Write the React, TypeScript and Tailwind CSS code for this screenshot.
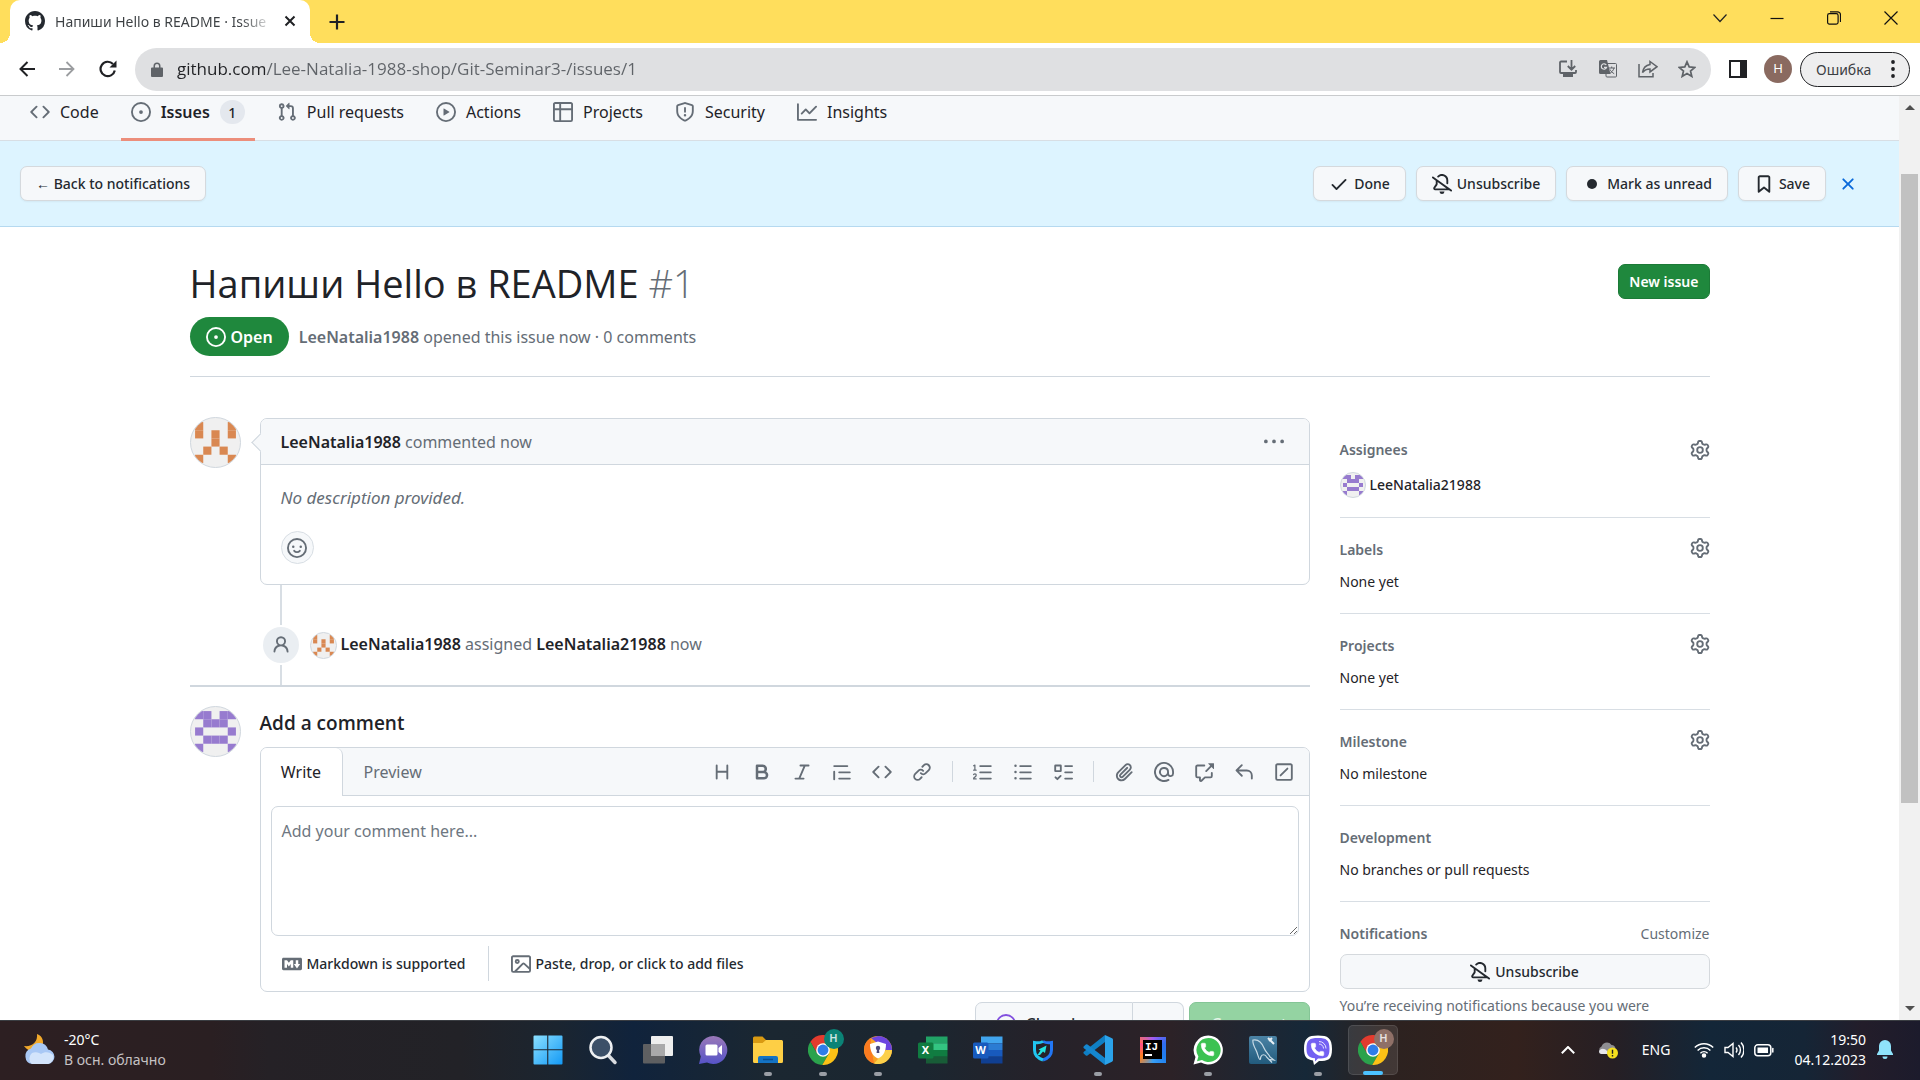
import React from "react";
import { Phone } from "lucide-react";

const P = {
  code: "m11.28 3.22 4.25 4.25a.75.75 0 0 1 0 1.06l-4.25 4.25a.749.749 0 0 1-1.275-.326.749.749 0 0 1 .215-.734L13.94 8l-3.72-3.72a.749.749 0 0 1 .326-1.275.749.749 0 0 1 .734.215Zm-6.56 0a.751.751 0 0 1 1.042.018.751.751 0 0 1 .018 1.042L2.06 8l3.72 3.72a.749.749 0 0 1-.326 1.275.749.749 0 0 1-.734-.215L.47 8.53a.75.75 0 0 1 0-1.06Z",
  issue: "M8 9.5a1.5 1.5 0 1 0 0-3 1.5 1.5 0 0 0 0 3ZM8 0a8 8 0 1 1 0 16A8 8 0 0 1 8 0ZM1.5 8a6.5 6.5 0 1 0 13 0 6.5 6.5 0 0 0-13 0Z",
  pull: "M1.5 3.25a2.25 2.25 0 1 1 3 2.122v5.256a2.251 2.251 0 1 1-1.5 0V5.372A2.25 2.25 0 0 1 1.5 3.25Zm5.677-.177L9.573.677A.25.25 0 0 1 10 .854V2.5h1A2.5 2.5 0 0 1 13.5 5v5.628a2.251 2.251 0 1 1-1.5 0V5a1 1 0 0 0-1-1h-1v1.646a.25.25 0 0 1-.427.177L7.177 3.427a.25.25 0 0 1 0-.354ZM3.75 2.5a.75.75 0 1 0 0 1.5.75.75 0 0 0 0-1.5Zm0 9.5a.75.75 0 1 0 0 1.5.75.75 0 0 0 0-1.5Zm8.25.75a.75.75 0 1 0 1.5 0 .75.75 0 0 0-1.5 0Z",
  play: "M8 0a8 8 0 1 1 0 16A8 8 0 0 1 8 0ZM1.5 8a6.5 6.5 0 1 0 13 0 6.5 6.5 0 0 0-13 0Zm4.879-2.773 4.264 2.559a.25.25 0 0 1 0 .428l-4.264 2.559A.25.25 0 0 1 6 10.559V5.442a.25.25 0 0 1 .379-.215Z",
  table: "M0 1.75C0 .784.784 0 1.75 0h12.5C15.216 0 16 .784 16 1.75v12.5A1.75 1.75 0 0 1 14.25 16H1.75A1.75 1.75 0 0 1 0 14.25ZM6.5 6.5v8h7.75a.25.25 0 0 0 .25-.25V6.5Zm8-1.5V1.75a.25.25 0 0 0-.25-.25H6.5V5Zm-13 1.5v7.75c0 .138.112.25.25.25H5v-8ZM5 5V1.5H1.75a.25.25 0 0 0-.25.25V5Z",
  shield: "M7.467.133a1.748 1.748 0 0 1 1.066 0l5.25 1.68A1.75 1.75 0 0 1 15 3.48V7c0 1.566-.32 3.182-1.303 4.682-.983 1.498-2.585 2.813-5.032 3.855a1.697 1.697 0 0 1-1.33 0c-2.447-1.042-4.049-2.357-5.032-3.855C1.32 10.182 1 8.566 1 7V3.48a1.755 1.755 0 0 1 1.217-1.667Zm.61 1.429a.25.25 0 0 0-.153 0l-5.25 1.68a.25.25 0 0 0-.174.238V7c0 1.358.275 2.666 1.057 3.86.784 1.194 2.121 2.34 4.366 3.297a.196.196 0 0 0 .154 0c2.245-.956 3.582-2.104 4.366-3.298C13.225 9.666 13.5 8.36 13.5 7V3.48a.251.251 0 0 0-.174-.237l-5.25-1.68ZM8.75 4.75v3a.75.75 0 0 1-1.5 0v-3a.75.75 0 0 1 1.5 0ZM9 10.5a1 1 0 1 1-2 0 1 1 0 0 1 2 0Z",
  graph: "M1.5 1.75V13.5h13.75a.75.75 0 0 1 0 1.5H.75a.75.75 0 0 1-.75-.75V1.75a.75.75 0 0 1 1.5 0Zm14.28 2.53-5.25 5.25a.75.75 0 0 1-1.06 0L7 7.06 4.28 9.78a.751.751 0 0 1-1.042-.018.751.751 0 0 1-.018-1.042l3.25-3.25a.75.75 0 0 1 1.06 0L10 7.94l4.72-4.72a.751.751 0 0 1 1.042.018.751.751 0 0 1 .018 1.042Z",
  check: "M13.78 4.22a.75.75 0 0 1 0 1.06l-7.25 7.25a.75.75 0 0 1-1.06 0L2.22 9.28a.751.751 0 0 1 .018-1.042.751.751 0 0 1 1.042-.018L6 10.94l6.72-6.72a.75.75 0 0 1 1.06 0Z",
  bellSlash: "m4.182 4.31.016.011 10.104 7.316.013.01 1.375.996a.75.75 0 1 1-.88 1.214L13.626 13H2.518a1.516 1.516 0 0 1-1.263-2.36l1.703-2.554A.255.255 0 0 0 3 7.947V5.305L.31 3.357a.75.75 0 1 1 .88-1.214Zm7.373 7.19L4.5 6.391v1.556c0 .346-.102.683-.294.97l-1.703 2.556a.017.017 0 0 0-.003.01c0 .005.002.009.005.012l.006.004.007.001ZM8 1.5c-.997 0-1.895.416-2.534 1.086A.75.75 0 1 1 4.38 1.55 5 5 0 0 1 13 5v2.373a.75.75 0 0 1-1.5 0V5A3.5 3.5 0 0 0 8 1.5ZM8 16a2 2 0 0 1-1.985-1.75c-.017-.137.097-.25.235-.25h3.5c.138 0 .252.113.235.25A2 2 0 0 1 8 16Z",
  dot: "M8 4a4 4 0 1 1 0 8 4 4 0 0 1 0-8Z",
  bookmark: "M3 2.75C3 1.784 3.784 1 4.75 1h6.5c.966 0 1.75.784 1.75 1.75v11.5a.75.75 0 0 1-1.227.579L8 11.722l-3.773 3.107A.751.751 0 0 1 3 14.25Zm1.75-.25a.25.25 0 0 0-.25.25v9.91l3.023-2.489a.75.75 0 0 1 .954 0l3.023 2.49V2.75a.25.25 0 0 0-.25-.25Z",
  x: "M3.72 3.72a.75.75 0 0 1 1.06 0L8 6.94l3.22-3.22a.749.749 0 0 1 1.275.326.749.749 0 0 1-.215.734L9.06 8l3.22 3.22a.749.749 0 0 1-.326 1.275.749.749 0 0 1-.734-.215L8 9.06l-3.22 3.22a.751.751 0 0 1-1.042-.018.751.751 0 0 1-.018-1.042L6.94 8 3.72 4.78a.75.75 0 0 1 0-1.06Z",
  kebab: "M8 9a1.5 1.5 0 1 0 0-3 1.5 1.5 0 0 0 0 3ZM1.5 9a1.5 1.5 0 1 0 0-3 1.5 1.5 0 0 0 0 3Zm13 0a1.5 1.5 0 1 0 0-3 1.5 1.5 0 0 0 0 3Z",
  gear: "M8 0a8.2 8.2 0 0 1 .701.031C9.444.095 9.99.645 10.16 1.29l.288 1.107c.018.066.079.158.212.224.231.114.454.243.668.386.123.082.233.09.299.071l1.103-.303c.644-.176 1.392.021 1.82.63.27.385.506.792.704 1.218.315.675.111 1.422-.364 1.891l-.814.806c-.049.048-.098.147-.088.294.016.257.016.515 0 .772-.01.147.038.246.088.294l.814.806c.475.469.679 1.216.364 1.891a7.977 7.977 0 0 1-.704 1.217c-.428.61-1.176.807-1.82.63l-1.102-.302c-.067-.019-.177-.011-.3.071a5.909 5.909 0 0 1-.668.386c-.133.066-.194.158-.211.224l-.29 1.106c-.168.646-.715 1.196-1.458 1.26a8.006 8.006 0 0 1-1.402 0c-.743-.064-1.289-.614-1.458-1.26l-.289-1.106c-.018-.066-.079-.158-.212-.224a5.738 5.738 0 0 1-.668-.386c-.123-.082-.233-.09-.299-.071l-1.103.303c-.644.176-1.392-.021-1.82-.63a8.12 8.12 0 0 1-.704-1.218c-.315-.675-.111-1.422.363-1.891l.815-.806c.05-.048.098-.147.088-.294a6.214 6.214 0 0 1 0-.772c.01-.147-.038-.246-.088-.294l-.815-.806C.635 6.045.431 5.298.746 4.623a7.92 7.92 0 0 1 .704-1.217c.428-.61 1.176-.807 1.82-.63l1.102.302c.067.019.177.011.3-.071.214-.143.437-.272.668-.386.133-.066.194-.158.211-.224l.29-1.106C6.009.645 6.556.095 7.299.03 7.53.01 7.764 0 8 0Zm-.571 1.525c-.036.003-.108.036-.137.146l-.289 1.105c-.147.561-.549.967-.998 1.189-.173.086-.34.183-.5.29-.417.278-.97.423-1.529.27l-1.103-.303c-.109-.03-.175.016-.195.045-.22.312-.412.644-.573.99-.014.031-.021.11.059.19l.815.806c.411.406.562.957.53 1.456a4.709 4.709 0 0 0 0 .582c.032.499-.119 1.05-.53 1.456l-.815.806c-.081.08-.073.159-.059.19.162.346.353.677.573.989.02.03.085.076.195.046l1.102-.303c.56-.153 1.113-.008 1.53.27.161.107.328.204.501.29.447.222.85.629.997 1.189l.289 1.105c.029.109.101.143.137.146a6.6 6.6 0 0 0 1.142 0c.036-.003.108-.036.137-.146l.289-1.105c.147-.561.549-.967.998-1.189.173-.086.34-.183.5-.29.417-.278.97-.423 1.529-.27l1.103.303c.109.029.175-.016.195-.045.22-.313.411-.644.573-.99.014-.031.021-.11-.059-.19l-.815-.806c-.411-.406-.562-.957-.53-1.456a4.709 4.709 0 0 0 0-.582c-.032-.499.119-1.05.53-1.456l.815-.806c.081-.08.073-.159.059-.19a6.464 6.464 0 0 0-.573-.989c-.02-.03-.085-.076-.195-.046l-1.102.303c-.56.153-1.113.008-1.53-.27a4.44 4.44 0 0 0-.501-.29c-.447-.222-.85-.629-.997-1.189l-.289-1.105c-.029-.11-.101-.143-.137-.146a6.6 6.6 0 0 0-1.142 0ZM11 8a3 3 0 1 1-6 0 3 3 0 0 1 6 0ZM9.5 8a1.5 1.5 0 1 0-3.001.001A1.5 1.5 0 0 0 9.5 8Z",
  person: "M10.561 8.073a6.005 6.005 0 0 1 3.432 5.142.75.75 0 1 1-1.498.07 4.5 4.5 0 0 0-8.99 0 .75.75 0 0 1-1.498-.07 6.004 6.004 0 0 1 3.431-5.142 3.999 3.999 0 1 1 5.123 0ZM10.5 5a2.5 2.5 0 1 0-5 0 2.5 2.5 0 0 0 5 0Z",
  heading: "M3.75 2a.75.75 0 0 1 .75.75V7h7V2.75a.75.75 0 0 1 1.5 0v10.5a.75.75 0 0 1-1.5 0V8.5h-7v4.75a.75.75 0 0 1-1.5 0V2.75A.75.75 0 0 1 3.75 2Z",
  bold: "M4 2h4.5a3.501 3.501 0 0 1 2.852 5.53A3.499 3.499 0 0 1 9.5 14H4a1 1 0 0 1-1-1V3a1 1 0 0 1 1-1Zm1 7v3h4.5a1.5 1.5 0 0 0 0-3Zm3.5-2a1.5 1.5 0 0 0 0-3H5v3Z",
  italic: "M6 2.75A.75.75 0 0 1 6.75 2h6.5a.75.75 0 0 1 0 1.5h-2.505l-3.858 9H9.25a.75.75 0 0 1 0 1.5h-6.5a.75.75 0 0 1 0-1.5h2.505l3.858-9H6.75A.75.75 0 0 1 6 2.75Z",
  quote: "M1.75 2.5h10.5a.75.75 0 0 1 0 1.5H1.75a.75.75 0 0 1 0-1.5Zm4 5h8.5a.75.75 0 0 1 0 1.5h-8.5a.75.75 0 0 1 0-1.5Zm0 5h8.5a.75.75 0 0 1 0 1.5h-8.5a.75.75 0 0 1 0-1.5ZM2.5 7.75v6a.75.75 0 0 1-1.5 0v-6a.75.75 0 0 1 1.5 0Z",
  link: "m7.775 3.275 1.25-1.25a3.5 3.5 0 1 1 4.95 4.95l-2.5 2.5a3.5 3.5 0 0 1-4.95 0 .751.751 0 0 1 .018-1.042.751.751 0 0 1 1.042-.018 1.998 1.998 0 0 0 2.83 0l2.5-2.5a2.002 2.002 0 0 0-2.83-2.83l-1.25 1.25a.751.751 0 0 1-1.042-.018.751.751 0 0 1-.018-1.042Zm-4.69 9.64a1.998 1.998 0 0 0 2.83 0l1.25-1.25a.751.751 0 0 1 1.042.018.751.751 0 0 1 .018 1.042l-1.25 1.25a3.5 3.5 0 1 1-4.95-4.95l2.5-2.5a3.5 3.5 0 0 1 4.95 0 .751.751 0 0 1-.018 1.042.751.751 0 0 1-1.042.018 1.998 1.998 0 0 0-2.83 0l-2.5 2.5a1.998 1.998 0 0 0 0 2.83Z",
  ol: "M5 3.25a.75.75 0 0 1 .75-.75h8.5a.75.75 0 0 1 0 1.5h-8.5A.75.75 0 0 1 5 3.25Zm0 5a.75.75 0 0 1 .75-.75h8.5a.75.75 0 0 1 0 1.5h-8.5A.75.75 0 0 1 5 8.25Zm0 5a.75.75 0 0 1 .75-.75h8.5a.75.75 0 0 1 0 1.5h-8.5a.75.75 0 0 1-.75-.75ZM.924 10.32a.5.5 0 0 1-.851-.525l.001-.001.001-.002.002-.004.007-.011c.097-.144.215-.273.348-.384.228-.19.588-.392 1.068-.392.468 0 .858.181 1.126.484.259.294.377.673.377 1.038 0 .987-.686 1.495-1.156 1.845l-.047.035c-.303.225-.522.4-.654.597h1.357a.5.5 0 0 1 0 1H.5a.5.5 0 0 1-.5-.5c0-1.005.692-1.52 1.167-1.875l.035-.025c.531-.396.8-.625.8-1.078a.57.57 0 0 0-.128-.376C1.806 10.068 1.695 10 1.5 10a.658.658 0 0 0-.429.163.835.835 0 0 0-.144.153ZM2.003 2.5V6h.503a.5.5 0 0 1 0 1H.5a.5.5 0 0 1 0-1h.503V3.308l-.28.14a.5.5 0 0 1-.446-.895l1.003-.5a.5.5 0 0 1 .723.447Z",
  ul: "M5.75 2.5h8.5a.75.75 0 0 1 0 1.5h-8.5a.75.75 0 0 1 0-1.5Zm0 5h8.5a.75.75 0 0 1 0 1.5h-8.5a.75.75 0 0 1 0-1.5Zm0 5h8.5a.75.75 0 0 1 0 1.5h-8.5a.75.75 0 0 1 0-1.5ZM2 14a1 1 0 1 1 0-2 1 1 0 0 1 0 2Zm1-6a1 1 0 1 1-2 0 1 1 0 0 1 2 0ZM2 4a1 1 0 1 1 0-2 1 1 0 0 1 0 2Z",
  tasks: "M2 2h4a1 1 0 0 1 1 1v4a1 1 0 0 1-1 1H2a1 1 0 0 1-1-1V3a1 1 0 0 1 1-1Zm4.655 8.595a.75.75 0 0 1 0 1.06L4.03 14.28a.75.75 0 0 1-1.06 0l-1.5-1.5a.749.749 0 0 1 .326-1.275.749.749 0 0 1 .734.215l.97.97 2.095-2.095a.75.75 0 0 1 1.06 0ZM9.75 2.5h5.5a.75.75 0 0 1 0 1.5h-5.5a.75.75 0 0 1 0-1.5Zm0 5h5.5a.75.75 0 0 1 0 1.5h-5.5a.75.75 0 0 1 0-1.5Zm0 5h5.5a.75.75 0 0 1 0 1.5h-5.5a.75.75 0 0 1 0-1.5Zm-7.25-9v3h3v-3Z",
  clip: "M12.212 3.02a1.753 1.753 0 0 0-2.478.003l-5.83 5.83a3.007 3.007 0 0 0-.88 2.127c0 .795.315 1.551.88 2.116.567.567 1.333.89 2.126.89.79 0 1.548-.321 2.116-.89l5.48-5.48a.75.75 0 0 1 1.061 1.06l-5.48 5.48a4.492 4.492 0 0 1-3.177 1.33c-1.2 0-2.345-.487-3.187-1.33a4.483 4.483 0 0 1-1.32-3.177c0-1.195.475-2.341 1.32-3.186l5.83-5.83a3.25 3.25 0 0 1 5.553 2.297c0 .863-.343 1.691-.953 2.301L7.439 12.39c-.375.377-.884.59-1.416.593a1.998 1.998 0 0 1-1.412-.593 1.992 1.992 0 0 1 0-2.828l5.48-5.48a.751.751 0 0 1 1.042.018.751.751 0 0 1 .018 1.042l-5.48 5.48a.492.492 0 0 0 0 .707.499.499 0 0 0 .352.154.51.51 0 0 0 .356-.154l5.833-5.827a1.755 1.755 0 0 0 0-2.481Z",
  mention: "M4.75 2.37a6.501 6.501 0 0 0 6.5 11.26.75.75 0 0 1 .75 1.298A7.999 7.999 0 0 1 .989 4.148 8 8 0 0 1 16 7.75v1.5a2.75 2.75 0 0 1-5.072 1.475 3.999 3.999 0 0 1-6.65-4.19A4 4 0 0 1 12 8v1.25a1.25 1.25 0 0 0 2.5 0V7.867a6.5 6.5 0 0 0-9.75-5.496ZM10.5 8a2.5 2.5 0 1 0-5 0 2.5 2.5 0 0 0 5 0Z",
  crossRef: "M2.75 3.5a.25.25 0 0 0-.25.25v7.5c0 .138.112.25.25.25h2a.75.75 0 0 1 .75.75v2.19l2.72-2.72a.749.749 0 0 1 .53-.22h4.5a.25.25 0 0 0 .25-.25v-2.5a.75.75 0 0 1 1.5 0v2.5A1.75 1.75 0 0 1 13.25 13H9.06l-2.573 2.573A1.458 1.458 0 0 1 4 14.543V13H2.75A1.75 1.75 0 0 1 1 11.25v-7.5C1 2.784 1.784 2 2.75 2h5.5a.75.75 0 0 1 0 1.5ZM16 1.25v4.146a.25.25 0 0 1-.427.177L14.03 4.03l-3.75 3.75a.749.749 0 0 1-1.275-.326.749.749 0 0 1 .215-.734l3.75-3.75-1.543-1.543A.25.25 0 0 1 11.604 1h4.146a.25.25 0 0 1 .25.25Z",
  reply: "M6.78 1.97a.75.75 0 0 1 0 1.06L3.81 6h6.44A4.75 4.75 0 0 1 15 10.75v2.5a.75.75 0 0 1-1.5 0v-2.5a3.25 3.25 0 0 0-3.25-3.25H3.81l2.97 2.97a.749.749 0 0 1-.326 1.275.749.749 0 0 1-.734-.215L1.47 7.28a.75.75 0 0 1 0-1.06l4.25-4.25a.75.75 0 0 1 1.06 0Z",
  slash: "M13.25 1c.966 0 1.75.784 1.75 1.75v10.5A1.75 1.75 0 0 1 13.25 15H2.75A1.75 1.75 0 0 1 1 13.25V2.75C1 1.784 1.784 1 2.75 1ZM2.75 2.5a.25.25 0 0 0-.25.25v10.5c0 .138.112.25.25.25h10.5a.25.25 0 0 0 .25-.25V2.75a.25.25 0 0 0-.25-.25Zm8.53 3.28-5.5 5.5a.751.751 0 0 1-1.042-.018.751.751 0 0 1-.018-1.042l5.5-5.5a.751.751 0 0 1 1.042.018.751.751 0 0 1 .018 1.042Z",
  markdown: "M14.85 3c.63 0 1.15.52 1.14 1.15v7.7c0 .63-.51 1.15-1.15 1.15H1.15C.52 13 0 12.48 0 11.84V4.15C0 3.52.52 3 1.15 3ZM9 11V5H7L5.5 7 4 5H2v6h2V8l1.5 1.92L7 8v3Zm2.99.5L14.5 8H13V5h-2v3H9.5Z",
  image: "M16 13.25A1.75 1.75 0 0 1 14.25 15H1.75A1.75 1.75 0 0 1 0 13.25V2.75C0 1.784.784 1 1.75 1h12.5c.966 0 1.75.784 1.75 1.75ZM1.75 2.5a.25.25 0 0 0-.25.25v10.5c0 .138.112.25.25.25h.94l.03-.03 6.077-6.078a1.75 1.75 0 0 1 2.412-.06L14.5 10.31V2.75a.25.25 0 0 0-.25-.25Zm12.5 11a.25.25 0 0 0 .25-.25v-.917l-4.298-3.889a.25.25 0 0 0-.344.009L4.81 13.5ZM7 6a2 2 0 1 1-3.999.001A2 2 0 0 1 7 6ZM5.5 6a.5.5 0 1 0-1 0 .5.5 0 0 0 1 0Z",
  github: "M8 0c4.42 0 8 3.58 8 8a8.013 8.013 0 0 1-5.45 7.59c-.4.08-.55-.17-.55-.38 0-.27.01-1.13.01-2.2 0-.75-.25-1.23-.54-1.48 1.78-.2 3.65-.88 3.65-3.95 0-.88-.31-1.59-.82-2.15.08-.2.36-1.02-.08-2.12 0 0-.67-.22-2.2.82-.64-.18-1.32-.27-2-.27-.68 0-1.36.09-2 .27-1.53-1.03-2.2-.82-2.2-.82-.44 1.1-.16 1.92-.08 2.12-.51.56-.82 1.28-.82 2.15 0 3.06 1.86 3.75 3.64 3.95-.23.2-.44.55-.51 1.07-.46.21-1.61.55-2.33-.66-.15-.24-.6-.83-1.23-.82-.67.01-.27.38.01.53.34.19.73.9.82 1.13.16.45.68 1.31 2.69.94 0 .67.01 1.3.01 1.49 0 .21-.15.45-.55.38A7.995 7.995 0 0 1 0 8c0-4.42 3.58-8 8-8Z",
};

type IconName = keyof typeof P;

function Icon({ name, className = "" }: { name: IconName; className?: string }) {
  return (
    <svg viewBox="0 0 16 16" fill="currentColor" aria-hidden="true" className={`size-5 shrink-0 ${className}`}>
      <path d={P[name]} />
    </svg>
  );
}

function Smiley() {
  return (
    <svg viewBox="0 0 16 16" fill="none" stroke="currentColor" strokeWidth="1.5" strokeLinecap="round" aria-hidden="true" className="size-5">
      <circle cx="8" cy="8" r="7.25" />
      <path d="M5.75 10.25Q6.6 11.25 8 11.25T10.25 10.25" />
      <circle cx="5" cy="7" r="1" fill="currentColor" stroke="none" />
      <circle cx="11" cy="7" r="1" fill="currentColor" stroke="none" />
    </svg>
  );
}

const ORANGE = ["10001", "10101", "00100", "01010", "10001"];
const PURPLE = ["11011", "01110", "10001", "01110", "10001"];

function Identicon({ rows, color, className }: { rows: string[]; color: string; className: string }) {
  return (
    <svg viewBox="0 0 60 60" role="img" aria-label="avatar" className={`shrink-0 rounded-full border border-[#d0d7de] bg-[#f0f0f0] ${className}`}>
      {rows.flatMap((r, y) =>
        r.split("").map((c, x) => (c === "1" ? <rect key={`${x}-${y}`} x={5 + x * 10} y={5 + y * 10} width="10" height="10" fill={color} /> : null))
      )}
    </svg>
  );
}

function ChromeLogo() {
  const arc = "M24 14H43.6A22 22 0 0 0 5.54 12.03L15.3 29Z";
  return (
    <svg viewBox="2 2 44 44" aria-hidden="true" className="size-[30px]">
      <path d={arc} fill="#e33b2e" />
      <path d={arc} fill="#2ba24c" transform="rotate(-120 24 24)" />
      <path d={arc} fill="#fbc116" transform="rotate(120 24 24)" />
      <circle cx="24" cy="24" r="10" fill="#fff" />
      <circle cx="24" cy="24" r="8" fill="#2f7de9" />
    </svg>
  );
}

/* ---------- browser frame ---------- */

function TabStrip() {
  return (
    <header className="flex h-[43px] shrink-0 items-stretch bg-[#ffde5c]">
      <span className="size-[10px] self-end bg-[radial-gradient(circle_at_0_0,transparent_10px,white_10px)]" />
      <div className="flex w-[300px] items-center rounded-t-[10px] bg-white pb-px pl-[15px] pr-2">
        <Icon name="github" className="text-[#24292f]" />
        <span className="ml-[10px] flex-1 overflow-hidden whitespace-nowrap bg-[linear-gradient(90deg,#3c4043_85%,#ffffff)] bg-clip-text text-[14px] text-transparent">
          Напиши Hello в README · Issue
        </span>
        <button aria-label="Close tab" className="ml-1 flex size-[24px] items-center justify-center">
          <svg viewBox="0 0 12 12" className="size-[12px]" stroke="#202124" strokeWidth="2"><path d="M1.5 1.5l9 9M10.500 1.500l-9 9" /></svg>
        </button>
      </div>
      <span className="size-[10px] self-end bg-[radial-gradient(circle_at_100%_0,transparent_10px,white_10px)]" />
      <button aria-label="New tab" className="ml-1 flex w-[26px] items-center justify-center">
        <svg viewBox="0 0 16 16" className="size-4" stroke="#202124" strokeWidth="2.200"><path d="M8 0.500v15M.5 8h15" /></svg>
      </button>
      <div className="ml-auto flex h-[36px] items-center pr-px">
        <button aria-label="Search tabs" className="flex w-[57px] justify-center">
          <svg viewBox="0 0 14 14" className="size-[14px]" fill="none" stroke="#222" strokeWidth="1.200"><path d="M.5 3.500L7 10.500 13.500 3.500" /></svg>
        </button>
        <button aria-label="Minimize" className="flex w-[57px] justify-center">
          <svg viewBox="0 0 14 14" className="size-[14px]" stroke="#111" strokeWidth="1.200"><path d="M.5 7.500h13" /></svg>
        </button>
        <button aria-label="Restore" className="flex w-[57px] justify-center">
          <svg viewBox="0 0 14 14" className="size-[14px]" fill="none" stroke="#111" strokeWidth="1.200"><rect x=".6" y="2.600" width="10.500" height="10.500" rx="1.800" /><path d="M3 .8h7.500a3 3 0 0 1 3 3V11" /></svg>
        </button>
        <button aria-label="Close window" className="flex w-[57px] justify-center">
          <svg viewBox="0 0 14 14" className="size-[14px]" stroke="#111" strokeWidth="1.200"><path d="M.5.5l13 13M13.500.5l-13 13" /></svg>
        </button>
      </div>
    </header>
  );
}

function Toolbar() {
  return (
    <div className="flex h-[53px] shrink-0 items-center border-b border-[#c9cbcd] bg-white pl-[7px] pr-[10px]">
      <button aria-label="Back" className="flex w-10 justify-center">
        <svg viewBox="0 0 16 16" className="size-4" fill="none" stroke="#202124" strokeWidth="2"><path d="M16 8H1.500M8.500 1L1.500 8l7 7" /></svg>
      </button>
      <button aria-label="Forward" className="flex w-10 justify-center">
        <svg viewBox="0 0 16 16" className="size-4" fill="none" stroke="#9b9da0" strokeWidth="1.800"><path d="M0 8h14.500M7.500 1l7 7-7 7" /></svg>
      </button>
      <button aria-label="Reload" className="flex w-[42px] justify-center">
        <svg viewBox="0 0 18 18" className="size-[18px]" fill="none" stroke="#202124" strokeWidth="2.200"><path d="M15.800 10.500A7.200 7.200 0 1 1 14 4" /><path d="M17.500 0.500v7h-7z" fill="#202124" stroke="none" /></svg>
      </button>
      <div className="ml-[6px] flex h-[43px] flex-1 items-center rounded-full bg-[#dfe0e2] pl-4 pr-[5px]">
        <svg viewBox="0 0 12 15" className="h-[15px] w-3" fill="#5f6368" aria-hidden="true"><path d="M2.500 5.500V4a3.500 3.500 0 0 1 7 0v1.500H11a1 1 0 0 1 1 1V14a1 1 0 0 1-1 1H1a1 1 0 0 1-1-1V6.500a1 1 0 0 1 1-1ZM4 5.500h4V4a2 2 0 0 0-4 0Z" /></svg>
        <input
          aria-label="Address"
          defaultValue="github.com/Lee-Natalia-1988-shop/Git-Seminar3-/issues/1"
          className="ml-[14px] min-w-0 flex-1 bg-[linear-gradient(90deg,#202124_90px,#5f6368_90px)] bg-clip-text font-['Open_Sans',sans-serif] text-[17px] text-transparent outline-none"
        />
        <button aria-label="Install" className="flex w-10 justify-center">
          <svg viewBox="0 0 18 18" className="size-[18px]" fill="none" stroke="#5f6368" strokeWidth="1.800"><path d="M8 1.500H2a1 1 0 0 0-1 1v9.500a1 1 0 0 0 1 1h14a1 1 0 0 0 1-1V10M12.500 0v9M8.800 6l3.700 3.700L16.200 6" /><path d="M4 13h10v4H4z" fill="#5f6368" stroke="none" /></svg>
        </button>
        <button aria-label="Translate" className="flex w-10 justify-center">
          <svg viewBox="0 0 18 18" className="size-[18px]" aria-hidden="true">
            <rect x="7" y="3.500" width="10.500" height="13.500" rx="1" fill="#dfe0e2" stroke="#5f6368" />
            <path d="M9.500 8h6.500M12.700 6.500V8M15 8c-.6 2.500-2.500 4.500-4.500 5.500M11 9.500c.8 1.800 2.500 3.300 4.200 4.200" fill="none" stroke="#5f6368" />
            <path d="M1.500 0H8l3.500 14H1.500A1.500 1.500 0 0 1 0 12.500v-11A1.500 1.500 0 0 1 1.500 0Z" fill="#5f6368" />
            <path d="M7.300 5A2.700 2.700 0 1 0 7.600 7.300H5" fill="none" stroke="#dfe0e2" strokeWidth="1.200" />
          </svg>
        </button>
        <button aria-label="Share" className="flex w-10 justify-center">
          <svg viewBox="0 0 20 18" className="h-[18px] w-5" fill="none" stroke="#5f6368" strokeWidth="1.500"><path d="M1 4v12.700h14V13" /><path d="M12 1.500l7 5.200-7 5.200V9c-3.500 0-5.800 1.200-7.500 3.700.5-4 3-7.400 7.500-8.200Z" /></svg>
        </button>
        <button aria-label="Bookmark" className="flex w-[38px] justify-center">
          <svg viewBox="0 0 18 18" className="size-[18px]" fill="none" stroke="#5f6368" strokeWidth="1.700"><path d="M9 1.800l2.200 5.100 5.500.5-4.200 3.600 1.300 5.400L9 13.500l-4.800 2.900 1.300-5.400L1.300 7.400l5.500-.5Z" /></svg>
        </button>
      </div>
      <button aria-label="Side panel" className="ml-[18px] size-[18px] border-2 border-r-[7px] border-[#202124] bg-white" />
      <button aria-label="Profile" className="ml-[17px] size-[28px] rounded-full bg-[#8a6a60] text-[13px] text-white">Н</button>
      <button className="ml-2 flex h-[35px] w-[110px] items-center justify-between rounded-full border border-[#202124] bg-[#eeeeef] pl-[15px] pr-[14px] text-[14px] text-[#3c4043]">
        Ошибка
        <svg viewBox="0 0 4 18" className="h-[18px] w-1" fill="#202124" aria-hidden="true"><circle cx="2" cy="2" r="1.900" /><circle cx="2" cy="9" r="1.900" /><circle cx="2" cy="16" r="1.900" /></svg>
      </button>
    </div>
  );
}

/* ---------- repository page ---------- */

const NAV: { label: string; icon: IconName; count?: number }[] = [
  { label: "Code", icon: "code" },
  { label: "Issues", icon: "issue", count: 1 },
  { label: "Pull requests", icon: "pull" },
  { label: "Actions", icon: "play" },
  { label: "Projects", icon: "table" },
  { label: "Security", icon: "shield" },
  { label: "Insights", icon: "graph" },
];

function RepoNav() {
  return (
    <nav className="flex h-[45px] shrink-0 items-start gap-3 border-b border-[#d8dee4] bg-[#f6f8fa] px-5">
      {NAV.map((n) => (
        <a
          key={n.label}
          href="#"
          className={`flex h-[45px] shrink-0 items-center gap-[10px] border-b-[3px] px-[10px] pb-[10px] text-[16px] text-[#1f2328] ${n.count ? "border-[#ec8e7b] font-semibold" : "border-transparent"}`}
        >
          <Icon name={n.icon} className="text-[#656d76]" />
          {n.label}
          {n.count && <span className="flex h-6 w-[25px] items-center justify-center rounded-full bg-[#e4e8ee] text-[14px] font-medium">{n.count}</span>}
        </a>
      ))}
    </nav>
  );
}

function Btn({ icon, children, className = "" }: { icon?: IconName; children: React.ReactNode; className?: string }) {
  return (
    <button className={`flex h-[35px] items-center justify-center gap-[5px] whitespace-nowrap rounded-[7px] border border-[#d5d9dd] bg-[#f6f8fa] px-[15px] text-[14px] font-medium text-[#24292f] ${className}`}>
      {icon && <Icon name={icon} />}
      {children}
    </button>
  );
}

function NotificationBar() {
  return (
    <div className="flex h-[86px] shrink-0 items-center gap-[10px] border-b border-[#b5d9f0] bg-[#ddf4ff] pl-5 pr-[41px]">
      <Btn className="mr-auto shadow-xs">← Back to notifications</Btn>
      <Btn icon="check" className="shadow-xs">Done</Btn>
      <Btn icon="bellSlash" className="shadow-xs">Unsubscribe</Btn>
      <Btn icon="dot" className="shadow-xs">Mark as unread</Btn>
      <Btn icon="bookmark" className="shadow-xs">Save</Btn>
      <button aria-label="Dismiss" className="ml-[2px] text-[#0969da]"><Icon name="x" /></button>
    </div>
  );
}

function IssueHeader() {
  return (
    <div className="border-b border-[#d0d7de] pb-5 pt-8">
      <div className="flex items-start justify-between">
        <h1 className="font-['Open_Sans','Noto_Sans',sans-serif] text-[38px] leading-[48px] text-[#1f2328]">
          Напиши Hello в README <span className="font-light text-[#656d76]">#1</span>
        </h1>
        <button className="mt-[5px] h-[35px] rounded-[7px] border border-[#1c7a37] bg-[#1f883d] px-[10px] text-[14px] font-semibold text-white">New issue</button>
      </div>
      <div className="mt-[10px] flex items-center gap-[10px] text-[16px] text-[#656d76]">
        <span className="flex h-[39px] items-center gap-[5px] rounded-full bg-[#1f883d] px-4 font-semibold text-white">
          <Icon name="issue" />
          Open
        </span>
        <p><a href="#" className="font-semibold">LeeNatalia1988</a> opened this issue now · 0 comments</p>
      </div>
    </div>
  );
}

function Comment() {
  return (
    <article className="flex items-start gap-[19px]">
      <Identicon rows={ORANGE} color="#d98852" className="size-[51px]" />
      <div className="relative mt-px flex-1 rounded-[7px] border border-[#d0d7de]">
        <span className="absolute -left-[7px] top-[17px] size-[13px] rotate-45 border-b border-l border-[#d0d7de] bg-[#f6f8fa]" />
        <header className="relative flex h-[46px] items-center justify-between rounded-t-[6px] border-b border-[#d0d7de] bg-[#f6f8fa] pl-5 pr-[25px] text-[16px] text-[#656d76]">
          <p><a href="#" className="font-semibold text-[#1f2328]">LeeNatalia1988</a> commented now</p>
          <button aria-label="Show options"><Icon name="kebab" /></button>
        </header>
        <div className="px-5 pb-5 pt-5">
          <p className="text-[17px] italic leading-[26px] text-[#656d76]">No description provided.</p>
          <button aria-label="Add reaction" className="mt-5 flex size-[33px] items-center justify-center rounded-full border border-[#d8dee4] bg-[#f6f8fa] text-[#656d76]">
            <Smiley />
          </button>
        </div>
      </div>
    </article>
  );
}

function Timeline() {
  return (
    <div className="border-b-2 border-[#d0d7de]">
      <div className="ml-[90px] h-10 border-l-2 border-[#d8dee4]" />
      <div className="flex h-10 items-center pl-[73px]">
        <span className="flex size-9 items-center justify-center rounded-full bg-[#eaeef2] text-[#656d76]"><Icon name="person" /></span>
        <Identicon rows={ORANGE} color="#d98852" className="ml-[11px] size-[27px]" />
        <p className="ml-[4px] pb-0.5 text-[16px] text-[#656d76]">
          <a href="#" className="font-semibold text-[#1f2328]">LeeNatalia1988</a> assigned <a href="#" className="font-semibold text-[#1f2328]">LeeNatalia21988</a> now
        </p>
      </div>
      <div className="ml-[90px] h-5 border-l-2 border-[#d8dee4]" />
    </div>
  );
}

const TOOLS: { label: string; icon: IconName }[][] = [
  [
    { label: "Heading", icon: "heading" },
    { label: "Bold", icon: "bold" },
    { label: "Italic", icon: "italic" },
    { label: "Quote", icon: "quote" },
    { label: "Code", icon: "code" },
    { label: "Link", icon: "link" },
  ],
  [
    { label: "Numbered list", icon: "ol" },
    { label: "Unordered list", icon: "ul" },
    { label: "Task list", icon: "tasks" },
  ],
  [
    { label: "Attach files", icon: "clip" },
    { label: "Mention", icon: "mention" },
    { label: "Reference", icon: "crossRef" },
    { label: "Saved replies", icon: "reply" },
    { label: "Slash commands", icon: "slash" },
  ],
];

function Editor() {
  return (
    <section className="flex items-start gap-[19px] pt-[19px]">
      <Identicon rows={PURPLE} color="#977bcf" className="size-[51px]" />
      <div className="flex-1">
        <h2 className="font-['Open_Sans',sans-serif] text-[19px] font-semibold leading-[34px] text-[#1f2328]"><label htmlFor="comment">Add a comment</label></h2>
        <div className="mt-[7px] rounded-[7px] border border-[#d0d7de]">
          <div className="flex h-12 items-stretch rounded-t-[6px] border-b border-[#d0d7de] bg-[#f6f8fa] text-[16px]">
            <button className="-mb-px w-[82px] rounded-t-[7px] border-r border-[#d0d7de] bg-white text-[#1f2328]">Write</button>
            <button className="px-[21px] text-[#656d76]">Preview</button>
            <div className="ml-auto flex items-center pr-[5px] text-[#656d76]">
              {TOOLS.map((group, i) => (
                <React.Fragment key={i}>
                  {i > 0 && <span className="mx-[10px] h-[21px] w-px bg-[#d0d7de]" />}
                  {group.map((t) => (
                    <button key={t.label} aria-label={t.label} className="flex w-10 justify-center"><Icon name={t.icon} /></button>
                  ))}
                </React.Fragment>
              ))}
            </div>
          </div>
          <div className="flex px-[10px] pt-[10px]">
            <textarea id="comment" placeholder="Add your comment here..." className="h-[130px] min-w-0 flex-1 resize-y rounded-[7px] border border-[#d0d7de] bg-white px-[10px] py-[11px] text-[16px] leading-[26px] placeholder:text-[#6e7781]" />
          </div>
          <div className="flex h-[55px] items-center px-[21px] text-[14px] font-medium text-[#24292f]">
            <a href="#" className="flex items-center gap-[5px]"><Icon name="markdown" className="text-[#656d76]" />Markdown is supported</a>
            <span className="mx-[22px] h-[35px] w-px bg-[#d0d7de]" />
            <button className="flex items-center gap-[5px]"><Icon name="image" className="text-[#656d76]" />Paste, drop, or click to add files</button>
          </div>
        </div>
        <div className="mt-[10px] flex justify-end">
          <button className="flex h-11 w-[158px] items-center gap-[10px] rounded-l-[7px] border border-[#d0d7de] bg-[#f6f8fa] pl-5 text-[16px] font-medium text-[#24292f]">
            <Icon name="issue" className="text-[#8250df]" />
            Close issue
          </button>
          <button aria-label="Select close reason" className="h-11 w-[51px] rounded-r-[7px] border border-l-0 border-[#d0d7de] bg-[#f6f8fa]" />
          <button className="ml-[5px] h-11 w-[121px] rounded-[7px] border border-[#84c596] bg-[#94d3a2] text-[16px] font-medium text-[#e4f4e8]">Comment</button>
        </div>
      </div>
    </section>
  );
}

const SECTIONS = [
  { title: "Labels", text: "None yet", gear: true },
  { title: "Projects", text: "None yet", gear: true },
  { title: "Milestone", text: "No milestone", gear: true },
  { title: "Development", text: "No branches or pull requests", gear: false },
];

function Sidebar() {
  return (
    <aside className="w-[370px] shrink-0 text-[14px] leading-5 text-[#1f2328]">
      <section className="border-b border-[#d8dee4] pb-[19px] pt-[23px]">
        <div className="flex justify-between">
          <h3 className="font-semibold text-[#656d76]">Assignees</h3>
          <button aria-label="Edit assignees" className="text-[#656d76]"><Icon name="gear" /></button>
        </div>
        <a href="#" className="mt-3 flex items-center gap-1 font-medium">
          <Identicon rows={PURPLE} color="#977bcf" className="size-[26px]" />
          LeeNatalia21988
        </a>
      </section>
      {SECTIONS.map((s) => (
        <section key={s.title} className="border-b border-[#d8dee4] pb-[21px] pt-5">
          <div className="flex items-start justify-between">
            <h3 className="pt-0.5 font-semibold text-[#656d76]">{s.title}</h3>
            {s.gear && <button aria-label={`Edit ${s.title}`} className="text-[#656d76]"><Icon name="gear" /></button>}
          </div>
          <p className="mt-3">{s.text}</p>
        </section>
      ))}
      <section className="pt-[22px] text-[#656d76]">
        <div className="flex justify-between">
          <h3 className="font-semibold">Notifications</h3>
          <button>Customize</button>
        </div>
        <Btn icon="bellSlash" className="mt-[10px] w-full">Unsubscribe</Btn>
        <p className="mt-[5px] leading-6">You’re receiving notifications because you were</p>
      </section>
    </aside>
  );
}

function Scrollbar() {
  return (
    <div className="flex w-[21px] shrink-0 flex-col items-center justify-between bg-[#f1f1f1] py-[7px]" aria-hidden="true">
      <svg viewBox="0 0 10 5" className="mt-[2px] h-[5px] w-[10px]" fill="#505050"><path d="M0 5l5-5 5 5z" /></svg>
      <div className="mb-1 mt-[64px] flex w-[17px] flex-1 flex-col">
        <div className="h-[76%] bg-[#c1c1c1]" />
      </div>
      <svg viewBox="0 0 10 5" className="mb-[2px] h-[5px] w-[10px]" fill="#505050"><path d="M0 0l5 5 5-5z" /></svg>
    </div>
  );
}

/* ---------- taskbar ---------- */

function OfficeIcon({ letter, colors, badge }: { letter: string; colors: string[]; badge: string }) {
  return (
    <span className="relative flex size-[30px] justify-end">
      <svg viewBox="0 0 30 30" className="size-[30px]" aria-hidden="true">
        {colors.map((c, i) => <rect key={c} x="8" y={1.500 + i * 6.750} width="21.500" height="6.750" fill={c} />)}
        <rect x="0" y="7.500" width="15.500" height="16" rx="1.500" fill={badge} />
      </svg>
      <span className="absolute left-0 top-[7px] w-4 text-center text-[11px] font-bold leading-4 text-white">{letter}</span>
    </span>
  );
}

function ProfileChrome({ badge }: { badge: string }) {
  return (
    <span className="relative">
      <ChromeLogo />
      <span className={`absolute -right-[6px] -top-[6px] flex size-[20px] items-center justify-center rounded-full text-[11px] font-semibold text-white/80 ${badge}`}>H</span>
    </span>
  );
}

const APPS: { name: string; icon: React.ReactNode; running?: boolean; active?: boolean }[] = [
  {
    name: "Start",
    icon: (
      <svg viewBox="0 0 30 30" className="size-[30px]">
        <defs><linearGradient id="win" x1="0" y1="0" x2="1" y2="1"><stop offset="0" stopColor="#8be0ff" /><stop offset="1" stopColor="#1399f5" /></linearGradient></defs>
        <path d="M.5 1.500a1 1 0 0 1 1-1h12.700v13.700H.5ZM15.300.5h13.200a1 1 0 0 1 1 1v12.700H15.300ZM.5 15.300h13.700v14.200H1.500a1 1 0 0 1-1-1ZM15.300 15.300h14.200v13.200a1 1 0 0 1-1 1H15.300Z" fill="url(#win)" />
      </svg>
    ),
  },
  {
    name: "Search",
    icon: (
      <svg viewBox="0 0 30 30" className="size-[30px]"><path d="M19.500 19.500l7.500 8" stroke="#d9dce0" strokeWidth="3.500" strokeLinecap="round" /><circle cx="13" cy="12.500" r="10.500" fill="#3c5068" stroke="#eef0f2" strokeWidth="2.500" /></svg>
    ),
  },
  {
    name: "Task view",
    icon: (
      <svg viewBox="0 0 30 30" className="size-[30px]"><rect x="8" y="1" width="22" height="20" rx="1" fill="#eeeeee" /><rect x="0" y="9" width="22" height="19.500" rx="1" fill="#5e5f61" /><rect x="8" y="9" width="14" height="12" fill="#a9a9aa" /></svg>
    ),
  },
  {
    name: "Chat",
    icon: (
      <svg viewBox="0 0 30 30" className="size-[30px]">
        <defs><linearGradient id="chat" x1="0" y1="0" x2="0" y2="1"><stop offset="0" stopColor="#9a78b8" /><stop offset="1" stopColor="#5653c8" /></linearGradient></defs>
        <path d="M15.500 1A14 14 0 1 1 9 27.500L1 29l1.800-7.500A14 14 0 0 1 15.500 1Z" fill="url(#chat)" />
        <rect x="7.500" y="9.500" width="12" height="11" rx="1.500" fill="#fff" /><path d="M20.500 13l3.500-3v10l-3.500-3z" fill="#fff" />
      </svg>
    ),
  },
  {
    name: "Explorer",
    running: true,
    icon: (
      <svg viewBox="0 0 30 30" className="size-[30px]"><path d="M0 3a1.500 1.500 0 0 1 1.500-1.500h8L13 5H29v8H0Z" fill="#d99a12" /><path d="M0 8h9.500L13 5h15.500A1.500 1.500 0 0 1 30 6.500v20a1.500 1.500 0 0 1-1.500 1.500h-27A1.500 1.500 0 0 1 0 26.500Z" fill="#fecf45" /><path d="M5 28v-5a2 2 0 0 1 2-2h16a2 2 0 0 1 2 2v5Z" fill="#1473c4" /><path d="M10 24.500h10" stroke="#0b4f90" strokeWidth="1.500" /></svg>
    ),
  },
  { name: "Chrome", running: true, icon: <ProfileChrome badge="bg-[#0b8376]" /> },
  {
    name: "Secure browser",
    running: true,
    icon: (
      <svg viewBox="0 0 30 30" className="size-[30px]">
        <circle cx="15" cy="15" r="14" fill="#f7a325" />
        <path d="M15 1A14 14 0 0 1 29 15L23 15 8 3Z" fill="#6d45e0" />
        <path d="M8 3A14 14 0 0 0 11 28.400L8 12Z" fill="#fb7b20" />
        <path d="M11 28.400A14 14 0 0 0 29 15l-6 0Z" fill="#fcd04a" />
        <path d="M15 6.500l8 2.500c0 7-2.500 12-8 14.500C9.500 21 7 16 7 9Z" fill="#fff" />
        <circle cx="15" cy="13" r="2.200" fill="#4a4a7a" /><path d="M14.200 13h1.600l.6 5h-2.800z" fill="#4a4a7a" />
      </svg>
    ),
  },
  { name: "Excel", icon: <OfficeIcon letter="X" colors={["#21a366", "#33c481", "#107c41", "#185c37"]} badge="#107c41" /> },
  { name: "Word", icon: <OfficeIcon letter="W" colors={["#41a5ee", "#2b7cd3", "#185abd", "#103f91"]} badge="#185abd" /> },
  {
    name: "Security",
    icon: (
      <svg viewBox="0 0 30 30" className="size-[30px]" fill="none"><path d="M15 6.500Q19 8.500 23.500 7.500V15c0 5-4 8.500-8.500 10" stroke="#2277f5" strokeWidth="3" /><path d="M15 6.500Q11 8.500 6.500 7.500V15c0 5 4 8.500 8.500 10" stroke="#21c5f0" strokeWidth="3" /><path d="M9.500 20l3-4.500-2-1 8-4-1.500 7.500-2-1.500-3 3.500z" fill="#22e3e0" /></svg>
    ),
  },
  {
    name: "VS Code",
    running: true,
    icon: (
      <svg viewBox="0 0 30 30" className="size-[30px]"><path d="M22 7L4.500 20.500a1.300 1.300 0 0 1-1.700-.1L.9 18.700a1.300 1.300 0 0 1 0-1.900L22 0Z" fill="#0f7fc4" /><path d="M22 23L4.500 9.500a1.300 1.300 0 0 0-1.700.1L.9 11.300a1.300 1.300 0 0 0 0 1.900L22 30Z" fill="#1587cf" /><path d="M22 0l7 3.300a1.800 1.800 0 0 1 1 1.700v20a1.800 1.800 0 0 1-1 1.700L22 30Z" fill="#2ba3ea" /></svg>
    ),
  },
  {
    name: "IntelliJ IDEA",
    icon: (
      <span className="flex size-[26px] items-center justify-center bg-[conic-gradient(from_300deg,#fe6a5b,#a05bf5,#2f6ef0,#1f7ef0,#38a0f5,#fc801d,#fe4b8b)]">
        <span className="flex size-[19px] flex-col items-start bg-black pl-[2px] font-['Liberation_Mono',monospace] text-[11px] font-bold leading-[14px] text-white">
          IJ
          <span className="h-[2px] w-[7px] bg-white" />
        </span>
      </span>
    ),
  },
  {
    name: "WhatsApp",
    running: true,
    icon: (
      <span className="relative flex size-[30px] items-center justify-center">
        <svg viewBox="0 0 30 30" className="size-[30px]"><path d="M15.500.5A14.500 14.500 0 1 1 8 27.500L.5 29.500l2-7.500A14.500 14.500 0 0 1 15.500.5Z" fill="#fff" /><path d="M15.500 3A12 12 0 1 1 9 25l-5 1.300 1.400-4.800A12 12 0 0 1 15.500 3Z" fill="#3cc252" /></svg>
        <Phone className="absolute size-[15px] fill-white text-white" strokeWidth={1} />
      </span>
    ),
  },
  {
    name: "MySQL Workbench",
    icon: (
      <svg viewBox="0 0 30 30" className="size-[30px]" fill="none"><defs><linearGradient id="sql" x1="0" y1="0" x2="0" y2="1"><stop offset="0" stopColor="#4b83a5" /><stop offset="1" stopColor="#225b7d" /></linearGradient></defs><rect x="1" y="1" width="28" height="28" rx="2" fill="url(#sql)" /><path d="M5 5c5-1 9 3 11 8s5 6 6 9l4 3-4-.5 2 3-5-5c-2-4-5-3-6-1s0 3-1 3-2-4-3-7S4 9 5 5Z" stroke="#c8dbe6" strokeWidth="1.200" /><path d="M20 3l6 6M24 3l-3 3" stroke="#e8f0f5" strokeWidth="2" /></svg>
    ),
  },
  {
    name: "Viber",
    running: true,
    icon: (
      <span className="relative flex size-[30px] items-center justify-center">
        <svg viewBox="0 0 30 30" className="size-[30px]"><path d="M15 .5c10 0 14 2.500 14 13.500S25 26 16 26l-5 4-1-4.500C3.500 24.500 1 21.500 1 14 1 3 5 .5 15 .5Z" fill="#fff" /><path d="M15 3c8.500 0 11.500 2 11.500 11S23 23.500 15 23.500l-3 3v-3.200C5.800 22.500 3.500 20.500 3.500 14 3.500 5 6.500 3 15 3Z" fill="#7360f2" /><path d="M16 6.500a7 7 0 0 1 7 7M16 9a4.500 4.500 0 0 1 4.500 4.500" stroke="#e8e4ff" fill="none" /></svg>
        <Phone className="absolute size-[15px] fill-white text-white" strokeWidth={1} />
      </span>
    ),
  },
  { name: "Chrome (active)", active: true, icon: <ProfileChrome badge="bg-[#8f7067]" /> },
];

function Taskbar() {
  return (
    <footer className="grid h-[60px] shrink-0 grid-cols-[1fr_auto_1fr] items-stretch border-t border-[#3a3d42] bg-[linear-gradient(90deg,#2d1f22_0%,#2a1f22_11%,#252126_14%,#222227_24%,#1b2530_29%,#10233c_33%,#1b2731_40%,#1b2630_48%,#25222a_54%,#2c2227_61%,#162838_68%,#2c2220_72%,#33211d_79%,#261f24_84%,#132638_89%,#152536_94%,#231d2a_97%,#1c1b2c_100%)] pb-0.5 text-white">
      <button className="flex items-center gap-[9px] pl-[23px] text-left text-[14px] leading-5">
        <svg viewBox="0 0 32 32" className="size-8" aria-hidden="true">
          <path d="M14 0c6 2 8 9 4 14S5 18 1 12c8 1 14-4 13-12Z" fill="#f2a92b" />
          <path d="M9 30a8 8 0 0 1-1-15.500A9 9 0 0 1 25 15.500 7.300 7.300 0 0 1 25 30Z" fill="#a9c8f5" />
          <path d="M9 30a7 7 0 0 1 0-11c4-2 8 0 9 1 4-3 9-2 12 1a7 7 0 0 1-5 9Z" fill="#d3e4fb" />
        </svg>
        <span><span className="block">-20°C</span><span className="block text-[#c6c2c4]">В осн. облачно</span></span>
      </button>
      <div className="flex">
        {APPS.map((a) => (
          <button key={a.name} aria-label={a.name} className="flex w-[55px] items-center justify-center">
            <span className={`relative flex h-[50px] w-[50px] items-center justify-center rounded-[5px] ${a.active ? "border border-white/10 bg-white/10" : ""}`}>
              {a.icon}
              {a.running && <span className="absolute -bottom-[1px] h-1 w-2 rounded-full bg-[#9a9ea5]" />}
              {a.active && <span className="absolute -bottom-[1px] h-1 w-5 rounded-full bg-[#4cc2ff]" />}
            </span>
          </button>
        ))}
      </div>
      <div className="flex items-center justify-end pr-[27px] text-[14px]">
        <button aria-label="Hidden icons">
          <svg viewBox="0 0 14 8" className="h-2 w-[14px]" fill="none" stroke="#fff" strokeWidth="2"><path d="M.8 7.200L7 1l6.200 6.200" /></svg>
        </button>
        <button aria-label="OneDrive" className="ml-[23px]">
          <svg viewBox="0 0 20 18" className="h-[18px] w-5"><path d="M4 13a4 4 0 0 1-.5-7.500C5 1 11 0 13.500 4a4 4 0 0 1 4 4.500L14 13Z" fill="#8e8e92" /><path d="M1 11c0-3 5-5 8-1l2 3H3.500A2.500 2.500 0 0 1 1 11Z" fill="#e6e6ea" /><circle cx="14.500" cy="12" r="5.500" fill="#f5e01e" /><path d="M14.500 8.800v4M14.500 14v1.400" stroke="#222" strokeWidth="1.400" /></svg>
        </button>
        <button className="ml-6">ENG</button>
        <button aria-label="Network, volume, battery" className="ml-6 flex items-center gap-[10px]">
          <svg viewBox="0 0 20 16" className="h-4 w-5" fill="none" stroke="#fff" strokeWidth="1.500"><path d="M.8 5.500a13 13 0 0 1 18.400 0M3.600 8.500a9 9 0 0 1 12.800 0M6.400 11.300a5.200 5.200 0 0 1 7.200 0" /><circle cx="10" cy="13.500" r="1.500" fill="#fff" /></svg>
          <svg viewBox="0 0 20 18" className="h-[18px] w-5" fill="none" stroke="#fff" strokeWidth="1.400"><path d="M1 6.500h3L9 2.500v13l-5-4H1ZM12 6.500a4 4 0 0 1 0 5M14.500 4a7.500 7.500 0 0 1 0 10M17 1.500a11 11 0 0 1 0 15" /></svg>
          <svg viewBox="0 0 20 14" className="h-[14px] w-5" fill="none" stroke="#fff" strokeWidth="1.500"><rect x=".8" y="1.800" width="16" height="11" rx="3" /><rect x="3.500" y="4.500" width="10.500" height="5.500" fill="#fff" stroke="none" /><path d="M18.800 5.500v3.500" strokeLinecap="round" /></svg>
        </button>
        <button className="ml-5 text-right leading-5"><span className="block">19:50</span><span className="block">04.12.2023</span></button>
        <button aria-label="Notifications" className="ml-[11px]">
          <svg viewBox="0 0 16 19" className="h-[19px] w-4" fill="#8fe3fb"><path d="M8 0a6 6 0 0 1 6 6v4.500l2 3.500v1H0v-1l2-3.500V6a6 6 0 0 1 6-6ZM5.500 16.500h5a2.500 2.500 0 0 1-5 0Z" /></svg>
        </button>
      </div>
    </footer>
  );
}

export default function App() {
  return (
    <div className="flex h-screen flex-col overflow-hidden bg-white font-['Noto_Sans',sans-serif]">
      <TabStrip />
      <Toolbar />
      <div className="flex min-h-0 flex-1">
        <div className="flex min-w-0 flex-1 flex-col overflow-hidden">
          <RepoNav />
          <NotificationBar />
          <main className="mx-auto w-full max-w-[1520px] shrink-0">
            <IssueHeader />
            <div className="flex items-start gap-[30px] pt-10">
              <div className="min-w-0 flex-1">
                <Comment />
                <Timeline />
                <Editor />
              </div>
              <Sidebar />
            </div>
          </main>
        </div>
        <Scrollbar />
      </div>
      <Taskbar />
    </div>
  );
}
